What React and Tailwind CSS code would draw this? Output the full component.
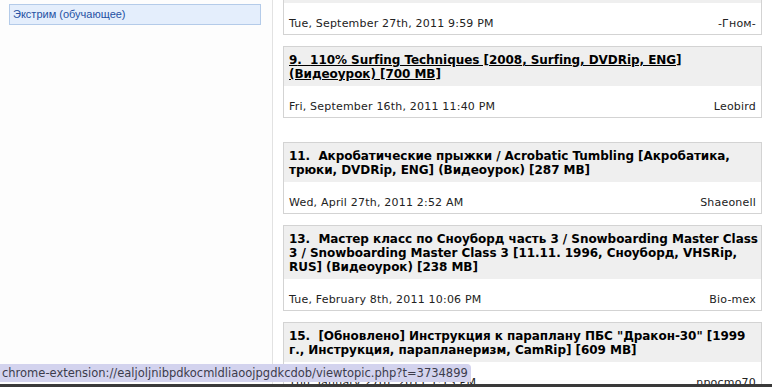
const TOPICS = [
  { id: 9, title: '110% Surfing Techniques [2008, Surfing, DVDRip, ENG] (Видеоурок) [700 MB]', date: 'Fri, September 16th, 2011 11:40 PM', author: 'Leobird', link: true },
  { id: 11, title: 'Акробатические прыжки / Acrobatic Tumbling [Акробатика, трюки, DVDRip, ENG] (Видеоурок) [287 MB]', date: 'Wed, April 27th, 2011 2:52 AM', author: 'Shaeonell', gap: true },
  { id: 13, title: 'Мастер класс по Сноуборд часть 3 / Snowboarding Master Class 3 / Snowboarding Master Class 3 [11.11. 1996, Сноуборд, VHSRip, RUS] (Видеоурок) [238 MB]', date: 'Tue, February 8th, 2011 10:06 PM', author: 'Bio-mex' },
  { id: 15, title: '[Обновлено] Инструкция к параплану ПБС "Дракон-30" [1999 г., Инструкция, парапланеризм, CamRip] [609 MB]', date: 'Thu, January 27th, 2011 1:15 PM', author: 'npocmo70' },
]

function Footer({ date, author }) {
  return (
    <div className="flex items-end justify-between px-[5px] pt-[14px] pb-[3px] text-[11px] leading-[14px] tracking-[0.2px] text-[#222]">
      <span>{date}</span>
      <span>{author}</span>
    </div>
  )
}

export default function App() {
  return (
    <div className="relative flex h-[387px] w-[772px] overflow-hidden bg-white font-['DejaVu_Sans',sans-serif]">
      <aside className="w-[273px] shrink-0 border-r border-[#e2e2e2] bg-[#fdfdfd] pt-[4px] pl-[9px] pr-[11px]">
        <div className="h-[21px] border border-[#b4cbe9] bg-[#e4eefc] px-[3px] text-[11px] leading-[19px] text-[#2451a3] font-['Liberation_Sans',sans-serif]">
          Экстрим (обучающее)
        </div>
      </aside>

      <main className="flex-1 pl-[10px] pr-[10px]">
        <div className="border border-t-0 border-[#d3d3d3]">
          <div className="h-[3px] bg-[#efefef]" />
          <Footer date="Tue, September 27th, 2011 9:59 PM" author="-Гном-" />
        </div>

        {TOPICS.map((t) => (
          <div key={t.id} className={`border border-[#d3d3d3] ${t.gap ? 'mt-[24px]' : 'mt-[11px]'}`}>
            <div className="bg-[#efefef] pl-[5px] pr-[1px] pt-[6px] pb-[5px] text-[12px] font-bold leading-[14px] tracking-[-0.05px] text-black">
              <span className={t.link ? 'underline' : ''}>
                {t.id}.&nbsp; {t.title}
              </span>
            </div>
            <Footer date={t.date} author={t.author} />
          </div>
        ))}
      </main>

      <div className="absolute left-0 top-[364px] h-[18px] rounded-tr-[4px] bg-[#d3d3ee] pl-[2px] pr-[3px] text-[11.5px] leading-[18px] text-[#3c3c4c] font-['DejaVu_Sans',sans-serif]">
        chrome-extension://ealjoljnibpdkocmldliaoojpgdkcdob/viewtopic.php?t=3734899
      </div>
      <div className="absolute bottom-0 left-0 h-[3px] w-full bg-[#3a3a3a]" />
    </div>
  )
}
